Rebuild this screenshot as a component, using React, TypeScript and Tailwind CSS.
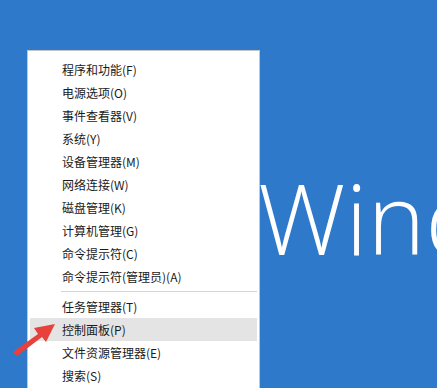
const groups: string[][] = [
  [
    "程序和功能(F)",
    "电源选项(O)",
    "事件查看器(V)",
    "系统(Y)",
    "设备管理器(M)",
    "网络连接(W)",
    "磁盘管理(K)",
    "计算机管理(G)",
    "命令提示符(C)",
    "命令提示符(管理员)(A)",
  ],
  ["任务管理器(T)", "控制面板(P)", "文件资源管理器(E)", "搜索(S)"],
];

const active = "控制面板(P)";

function MenuItem({ label }: { label: string }) {
  return (
    <li
      className={
        label === active
          ? "mx-[2px] flex h-[23px] items-center bg-[#e4e4e4] pl-[32px]"
          : "mx-[2px] flex h-[23px] items-center pl-[32px]"
      }
    >
      {label}
    </li>
  );
}

function Arrow() {
  return (
    <svg
      className="absolute left-0 top-[318px]"
      width="60"
      height="40"
      viewBox="0 318 60 40"
    >
      <polygon
        points="13,352 38,334 34,328 55,324 46,342 42,337 17,356"
        fill="#e8413b"
      />
    </svg>
  );
}

export default function App() {
  return (
    <div className="relative h-[388px] w-[437px] overflow-hidden bg-[#2e79c9] font-['Segoe_UI','Noto_Sans_CJK_SC',sans-serif]">
      <div className="absolute left-[258px] top-[168px] whitespace-nowrap font-['Open_Sans',sans-serif] text-[98px] font-[350] leading-none text-white">
        Windows
      </div>

      <div className="absolute left-[27px] top-[50px] h-[360px] w-[233px] border border-[#c6c6c6] bg-white pt-[7px] text-[12px] text-[#1a1a1a]">
        <ul>
          {groups[0].map((label) => (
            <MenuItem key={label} label={label} />
          ))}
        </ul>
        <div className="py-[3px] pl-[33px] pr-[2px]">
          <div className="h-px bg-[#d4d4d4]" />
        </div>
        <ul>
          {groups[1].map((label) => (
            <MenuItem key={label} label={label} />
          ))}
        </ul>
      </div>

      <Arrow />
    </div>
  );
}
